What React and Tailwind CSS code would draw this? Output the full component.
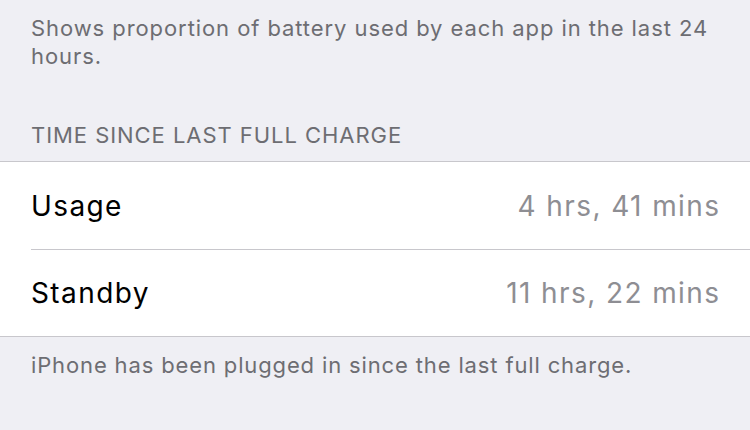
import React from "react";

const rows = [
  { label: "Usage", value: "4 hrs, 41 mins" },
  { label: "Standby", value: "11 hrs, 22 mins" },
];

export default function App() {
  return (
    <div
      className="w-[750px] h-[430px] overflow-hidden bg-[#efeff4]"
      style={{ fontFamily: "Inter, 'Liberation Sans', sans-serif" }}
    >
      {/* Section description */}
      <p className="px-[31px] pt-[14px] text-[22px] leading-[28px] tracking-[0.92px] text-[#6d6d72]">
        Shows proportion of battery used by each app in the last 24 hours.
      </p>

      {/* Header */}
      <div className="px-[31px] mt-[51px] pb-[12px] text-[22px] leading-[28px] tracking-[0.95px] text-[#6d6d72] uppercase">
        Time Since Last Full Charge
      </div>

      {/* Group */}
      <div className="bg-white border-y border-[#c8c7cc]">
        {rows.map((row, i) => (
          <div key={row.label} className="pl-[31px]">
            <div
              className={
                "flex items-center justify-between pr-[31px] h-[87px] text-[28px] tracking-[1.4px] " +
                (i > 0 ? "border-t border-[#c8c7cc]" : "")
              }
            >
              <span className="text-black">{row.label}</span>
              <span className="text-[#8e8e93] -mr-[1.4px]">{row.value}</span>
            </div>
          </div>
        ))}
      </div>

      {/* Footer */}
      <p className="px-[31px] pt-[14px] text-[22px] leading-[28px] tracking-[0.86px] text-[#6d6d72]">
        iPhone has been plugged in since the last full charge.
      </p>
    </div>
  );
}
